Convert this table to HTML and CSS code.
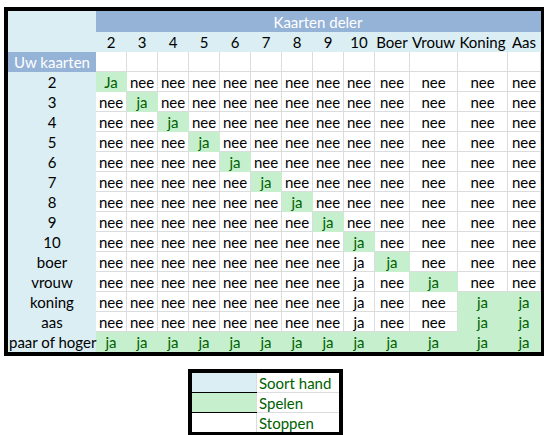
FILE: index.html
```html
<!DOCTYPE html>
<html>
<head>
    <link rel="stylesheet" href="styles.css">
</head>
<body>
    <div class="sheet">
        <table class="chart">
            <colgroup>
                <col class="c-label">
                <col class="c-num"><col class="c-num"><col class="c-num"><col class="c-num"><col class="c-num">
                <col class="c-num"><col class="c-num"><col class="c-num"><col class="c-num">
                <col class="c-boer"><col class="c-vrouw"><col class="c-koning"><col class="c-aas">
            </colgroup>
            <tr>
                <td class="side" rowspan="2"></td>
                <td class="title" colspan="13">Kaarten deler</td>
            </tr>
            <tr class="dealer">
                <td>2</td><td>3</td><td>4</td><td>5</td><td>6</td><td>7</td><td>8</td><td>9</td><td>10</td>
                <td>Boer</td><td>Vrouw</td><td>Koning</td><td>Aas</td>
            </tr>
            <tr>
                <td class="side-title">Uw kaarten</td>
                <td></td><td></td><td></td><td></td><td></td><td></td><td></td><td></td><td></td><td></td><td></td><td></td><td></td>
            </tr>
        </table>
    </div>

    <div class="legend">
        <table>
            <tr><td class="swatch hand"></td><td>Soort hand</td></tr>
            <tr><td class="swatch play"></td><td>Spelen</td></tr>
            <tr><td class="swatch stop"></td><td>Stoppen</td></tr>
        </table>
    </div>

    <script>
        const rows = ['2', '3', '4', '5', '6', '7', '8', '9', '10', 'boer', 'vrouw', 'koning', 'aas', 'paar of hoger'];
        const table = document.querySelector('.chart');

        // which dealer columns say "ja" for each hand; green = play, plain = text only
        function cellFor(r, c) {
            if (r === 13) return { text: 'ja', play: true };
            if (r >= 11 && c >= 11) return { text: 'ja', play: true };
            if (r === c) return { text: r === 0 ? 'Ja' : 'ja', play: true };
            if (r >= 9 && c === 8) return { text: 'ja', play: false };
            return { text: 'nee', play: false };
        }

        rows.forEach((label, r) => {
            const tr = document.createElement('tr');
            const th = document.createElement('td');
            th.className = 'side';
            th.textContent = label;
            tr.appendChild(th);
            for (let c = 0; c < 13; c++) {
                const cell = cellFor(r, c);
                const td = document.createElement('td');
                td.textContent = cell.text;
                if (cell.play) td.className = 'play';
                tr.appendChild(td);
            }
            table.appendChild(tr);
        });
    </script>
</body>
</html>
```

FILE: styles.css
```css
body {
    margin: 0;
    background: #fff;
    color: #000;
    font-family: Lato, 'Liberation Sans', sans-serif;
    font-size: 15px;
}
.sheet {
    margin: 7px 0 0 4px;
    width: 532px;
    border: 4px solid #000;
}
.chart {
    width: 532px;
    border-collapse: collapse;
    table-layout: fixed;
}
.c-label { width: 87px; }
.c-num { width: 31px; }
.c-boer { width: 35px; }
.c-vrouw { width: 48px; }
.c-koning { width: 50px; }
.c-aas { width: 33px; }
.chart td {
    height: 19px;
    padding: 0;
    line-height: 18px;
    text-align: center;
    white-space: nowrap;
    border: 1px solid #dadcdd;
}
.chart .side {
    background: #daeef3;
    border-color: #daeef3;
    overflow: visible;
}
.chart .title {
    background: #95b3d7;
    border-color: #95b3d7;
    color: #fff;
}
.chart .dealer td {
    background: #daeef3;
    border-color: #daeef3;
}
.chart .side-title {
    background: #95b3d7;
    border-color: #95b3d7;
    color: #fff;
}
.chart .play {
    background: #c6efce;
    border-color: #c6efce;
    color: #006100;
}
.legend {
    margin: 13px 0 0 188px;
    width: 147px;
    border: 4px solid #000;
}
.legend table {
    width: 147px;
    border-collapse: collapse;
    table-layout: fixed;
}
.legend td {
    height: 19px;
    padding: 0 0 0 2px;
    line-height: 18px;
    color: #006100;
    border-bottom: 1px solid #dadcdd;
}
.legend tr:last-child td {
    border-bottom: none;
}
.legend .swatch {
    width: 62px;
    border-bottom: 1px solid #000;
    border-right: 1px solid #dadcdd;
}
.legend .hand { background: #daeef3; }
.legend .play { background: #c6efce; }
.legend .stop { background: #fff; }
```
